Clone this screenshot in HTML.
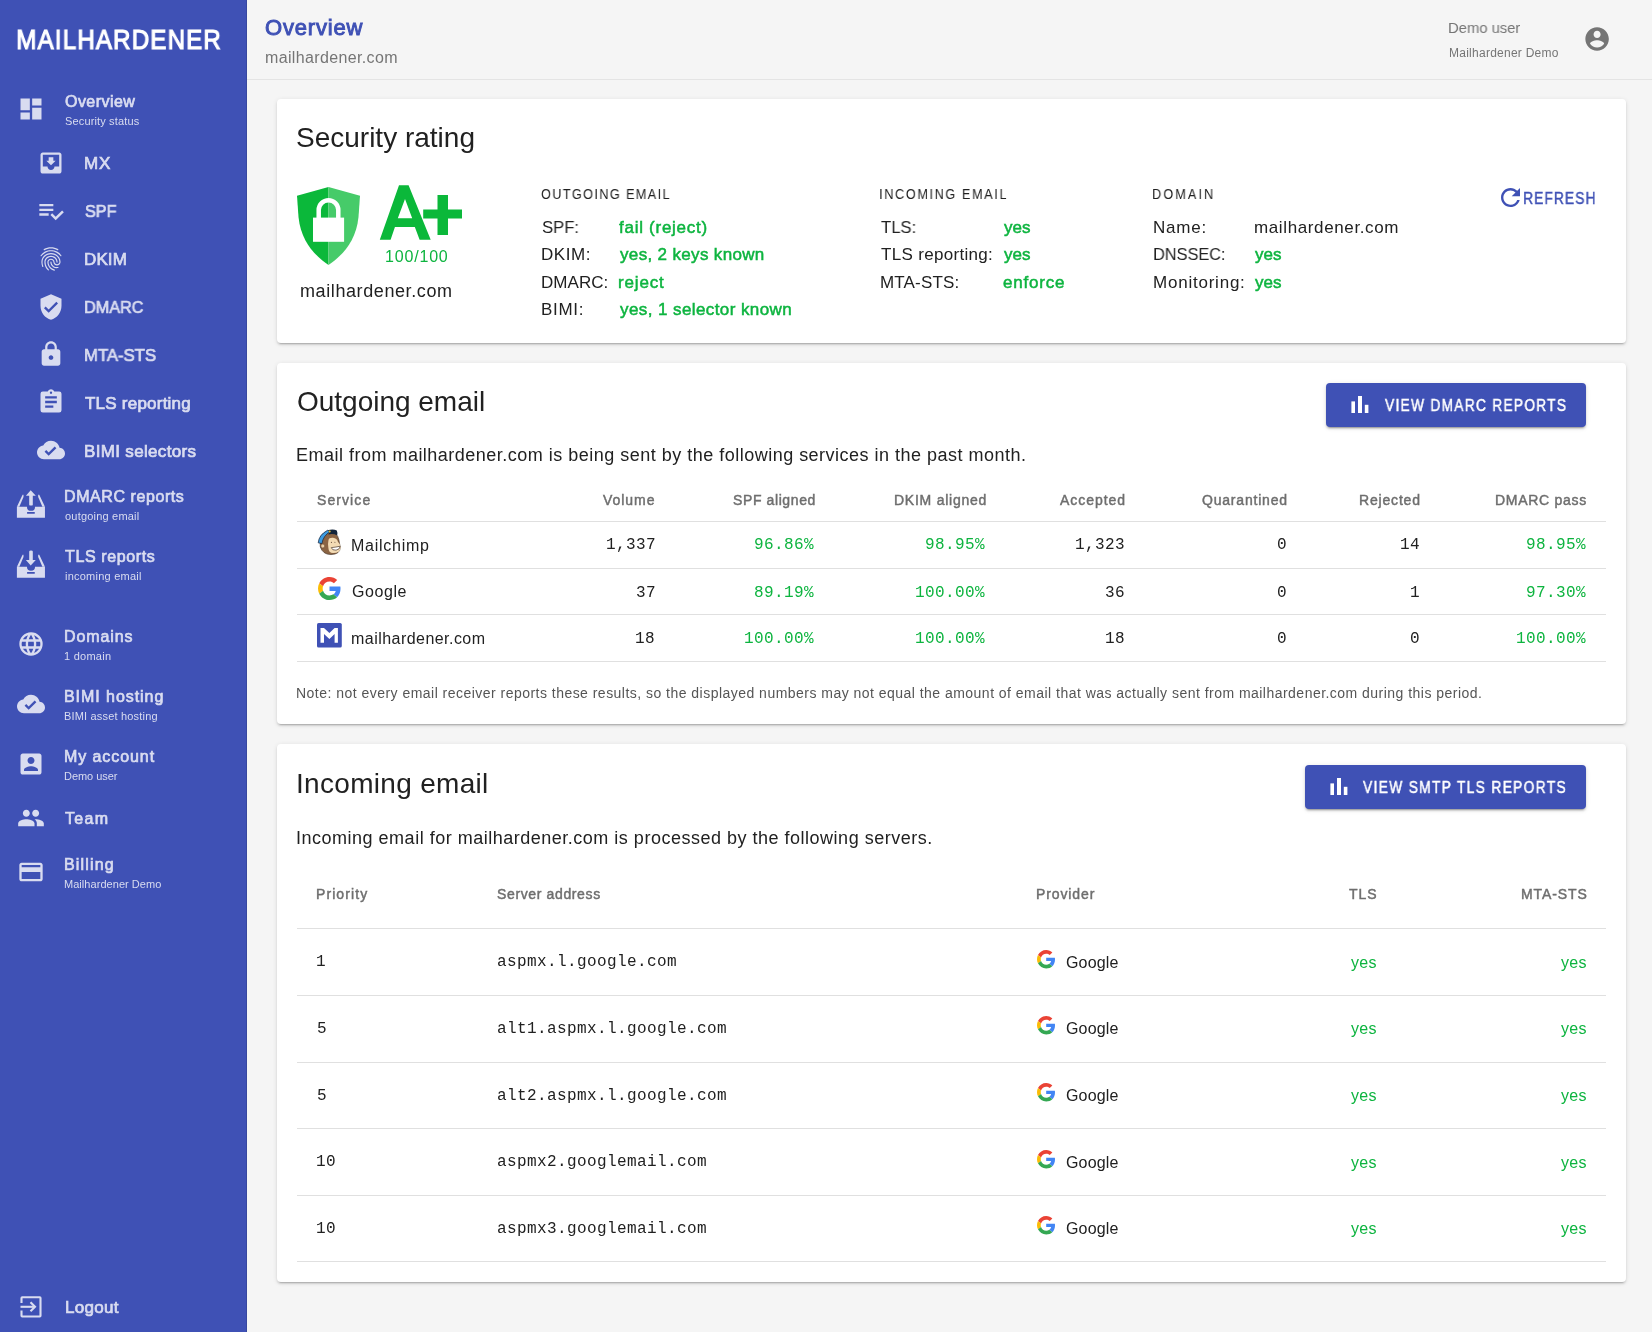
<!DOCTYPE html>
<html><head><meta charset="utf-8"><title>Mailhardener - Overview</title>
<style>
html,body{margin:0;padding:0}
body{width:1652px;height:1332px;position:relative;overflow:hidden;background:#F5F5F5;font-family:'Liberation Sans',sans-serif}
.t{position:absolute;white-space:nowrap;will-change:transform}
.i{position:absolute;overflow:visible}
.card{position:absolute;left:277px;width:1349px;background:#fff;border-radius:4px;box-shadow:0 3px 1px -2px rgba(0,0,0,.15),0 2px 2px 0 rgba(0,0,0,.1),0 1px 5px 0 rgba(0,0,0,.1)}
.btn{position:absolute;background:#3F51B5;border-radius:4px;box-shadow:0 3px 1px -2px rgba(0,0,0,.2),0 2px 2px 0 rgba(0,0,0,.14),0 1px 5px 0 rgba(0,0,0,.12)}
.hr{position:absolute;left:297px;width:1309px;height:1px;background:#E0E0E0}
</style></head><body>
<div style="position:absolute;left:0;top:0;width:247px;height:1332px;background:#3F51B5"></div>
<div style="position:absolute;left:246px;top:0;width:1px;height:1332px;background:rgba(0,0,0,.12)"></div>
<div style="position:absolute;left:247px;top:79px;width:1405px;height:1px;background:#E4E4E4"></div>
<div class="t" style="top:25.80px;font-size:28px;line-height:28px;color:#FFFFFF;font-family:'Liberation Sans',sans-serif;-webkit-text-stroke:1.22px #FFFFFF;letter-spacing:1.395px;left:16.46px;transform:scaleX(0.8600);transform-origin:2.24px 0;">MAILHARDENER</div>
<svg class="i" style="left:16.7px;top:95px;width:28px;height:28px" viewBox="0 0 24 24"><path fill="#D9DCF0" d="M13,3V9H21V3M13,21H21V11H13M3,21H11V15H3M3,13H11V3H3V13Z"/></svg>
<div class="t" style="top:93.86px;font-size:16px;line-height:16px;color:#D9DCF0;font-family:'Liberation Sans',sans-serif;-webkit-text-stroke:0.70px #D9DCF0;letter-spacing:0.457px;left:64.58px;">Overview</div>
<div class="t" style="top:116.39px;font-size:11px;line-height:11px;color:#D9DCF0;font-family:'Liberation Sans',sans-serif;letter-spacing:0.144px;left:64.80px;">Security status</div>
<svg class="i" style="left:37px;top:149px;width:28px;height:28px" viewBox="0 0 24 24"><path fill="#D9DCF0" d="M19 3H4.99c-1.11 0-1.98.9-1.98 2L3 19c0 1.1.88 2 1.99 2H19c1.1 0 2-.9 2-2V5c0-1.1-.9-2-2-2zm0 12h-4c0 1.66-1.35 3-3 3s-3-1.34-3-3H4.99V5H19v10zm-3-5h-2V7h-4v3H8l4 4 4-4z"/></svg>
<div class="t" style="top:155.31px;font-size:17px;line-height:17px;color:#D9DCF0;font-family:'Liberation Sans',sans-serif;-webkit-text-stroke:0.74px #D9DCF0;letter-spacing:0.800px;left:84.24px;">MX</div>
<svg class="i" style="left:37px;top:197px;width:28px;height:28px" viewBox="0 0 24 24"><path fill="#D9DCF0" d="M14 10H2v2h12v-2zm0-4H2v2h12V6zM2 16h8v-2H2v2zm19.5-4.5L23 13l-6.99 7-4.51-4.5L13 14l3.01 3 5.49-5.5z"/></svg>
<div class="t" style="top:203.31px;font-size:17px;line-height:17px;color:#D9DCF0;font-family:'Liberation Sans',sans-serif;-webkit-text-stroke:0.74px #D9DCF0;left:84.83px;transform:scaleX(0.9488);transform-origin:0.77px 0;">SPF</div>
<svg class="i" style="left:37px;top:245px;width:28px;height:28px" viewBox="0 0 24 24"><path fill="#D9DCF0" d="M17.81 4.47c-.08 0-.16-.02-.23-.06C15.66 3.42 14 3 12.01 3c-1.98 0-3.86.47-5.57 1.41-.24.13-.54.04-.68-.2-.13-.24-.04-.55.2-.68C7.82 2.52 9.86 2 12.01 2c2.13 0 3.98.47 6.01 1.51.25.13.34.43.21.67-.09.18-.26.29-.42.29zM3.5 9.72c-.1 0-.2-.03-.29-.09-.23-.16-.28-.47-.12-.7.99-1.4 2.25-2.5 3.75-3.27C9.98 4.04 14 4.03 17.15 5.65c1.5.77 2.76 1.86 3.75 3.25.16.22.11.54-.12.7-.23.16-.54.11-.7-.12-.9-1.26-2.04-2.25-3.39-2.94-2.87-1.47-6.54-1.47-9.4.01-1.36.7-2.5 1.7-3.4 2.96-.08.14-.23.21-.39.21zm6.25 12.07c-.13 0-.26-.05-.35-.15-.87-.87-1.34-1.43-2.01-2.64-.69-1.23-1.05-2.73-1.05-4.34 0-2.97 2.54-5.39 5.66-5.39s5.66 2.42 5.66 5.39c0 .28-.22.5-.5.5s-.5-.22-.5-.5c0-2.42-2.09-4.39-4.66-4.39-2.57 0-4.66 1.970-4.66 4.39 0 1.44.32 2.77.93 3.85.64 1.15 1.08 1.64 1.85 2.42.19.2.19.51 0 .71-.11.1-.24.15-.37.15zm7.17-1.85c-1.19 0-2.24-.3-3.1-.89-1.49-1.01-2.38-2.65-2.38-4.39 0-.28.22-.5.5-.5s.5.22.5.5c0 1.41.72 2.74 1.94 3.56.71.48 1.540.71 2.54.71.24 0 .64-.03 1.04-.1.27-.05.53.13.58.41.05.27-.13.53-.41.58-.57.11-1.07.12-1.21.12zM14.91 22c-.04 0-.09-.01-.13-.02-1.59-.44-2.63-1.03-3.72-2.1-1.4-1.39-2.17-3.24-2.17-5.22 0-1.62 1.38-2.94 3.08-2.94 1.7 0 3.08 1.32 3.08 2.94 0 1.07.93 1.94 2.08 1.94s2.08-.87 2.08-1.94c0-3.77-3.25-6.83-7.25-6.83-2.84 0-5.44 1.58-6.61 4.03-.39.81-.59 1.76-.59 2.8 0 .78.07 2.01.67 3.610.1.26-.03.55-.29.64-.26.1-.55-.04-.64-.29-.49-1.31-.73-2.61-.73-3.96 0-1.2.23-2.29.68-3.24 1.33-2.79 4.28-4.6 7.51-4.6 4.55 0 8.25 3.51 8.25 7.83 0 1.62-1.38 2.94-3.08 2.94s-3.08-1.32-3.08-2.94c0-1.07-.93-1.94-2.08-1.94s-2.08.87-2.08 1.94c0 1.71.66 3.31 1.87 4.51.95.94 1.86 1.46 3.27 1.85.27.07.42.35.35.61-.05.23-.26.38-.47.38z"/></svg>
<div class="t" style="top:251.31px;font-size:17px;line-height:17px;color:#D9DCF0;font-family:'Liberation Sans',sans-serif;-webkit-text-stroke:0.74px #D9DCF0;letter-spacing:0.102px;left:84.24px;">DKIM</div>
<svg class="i" style="left:37px;top:293px;width:28px;height:28px" viewBox="0 0 24 24"><path fill="#D9DCF0" d="M12 1L3 5v6c0 5.55 3.84 10.74 9 12 5.16-1.26 9-6.45 9-12V5l-9-4zm-2 16l-4-4 1.41-1.41L10 14.17l6.59-6.59L18 9l-8 8z"/></svg>
<div class="t" style="top:299.31px;font-size:17px;line-height:17px;color:#D9DCF0;font-family:'Liberation Sans',sans-serif;-webkit-text-stroke:0.74px #D9DCF0;left:84.24px;transform:scaleX(0.9528);transform-origin:1.36px 0;">DMARC</div>
<svg class="i" style="left:37px;top:340px;width:28px;height:28px" viewBox="0 0 24 24"><path fill="#D9DCF0" d="M18 8h-1V6c0-2.76-2.24-5-5-5S7 3.24 7 6v2H6c-1.1 0-2 .9-2 2v10c0 1.1.9 2 2 2h12c1.1 0 2-.9 2-2V10c0-1.1-.9-2-2-2zm-6 9c-1.1 0-2-.9-2-2s.9-2 2-2 2 .9 2 2-.9 2-2 2zm3.1-9H8.9V6c0-1.71 1.39-3.1 3.1-3.1 1.71 0 3.1 1.39 3.1 3.1v2z"/></svg>
<div class="t" style="top:347.31px;font-size:17px;line-height:17px;color:#D9DCF0;font-family:'Liberation Sans',sans-serif;-webkit-text-stroke:0.74px #D9DCF0;left:84.24px;transform:scaleX(0.9827);transform-origin:1.36px 0;">MTA-STS</div>
<svg class="i" style="left:37px;top:388px;width:28px;height:28px" viewBox="0 0 24 24"><path fill="#D9DCF0" d="M17,9H7V7H17M17,13H7V11H17M14,17H7V15H14M12,3A1,1 0 0,1 13,4A1,1 0 0,1 12,5A1,1 0 0,1 11,4A1,1 0 0,1 12,3M19,3H14.82C14.4,1.84 13.3,1 12,1C10.7,1 9.6,1.84 9.18,3H5A2,2 0 0,0 3,5V19A2,2 0 0,0 5,21H19A2,2 0 0,0 21,19V5A2,2 0 0,0 19,3Z"/></svg>
<div class="t" style="top:395.31px;font-size:17px;line-height:17px;color:#D9DCF0;font-family:'Liberation Sans',sans-serif;-webkit-text-stroke:0.74px #D9DCF0;letter-spacing:0.228px;left:85.26px;">TLS reporting</div>
<svg class="i" style="left:37px;top:436px;width:28px;height:28px" viewBox="0 0 24 24"><path fill="#D9DCF0" d="M19.35 10.04C18.67 6.59 15.64 4 12 4 9.11 4 6.6 5.64 5.35 8.04 2.34 8.36 0 10.91 0 14c0 3.31 2.69 6 6 6h13c2.76 0 5-2.24 5-5 0-2.64-2.05-4.78-4.65-4.96zM10 17l-3.5-3.5 1.41-1.41L10 14.17 15.18 9l1.41 1.41L10 17z"/></svg>
<div class="t" style="top:443.31px;font-size:17px;line-height:17px;color:#D9DCF0;font-family:'Liberation Sans',sans-serif;-webkit-text-stroke:0.74px #D9DCF0;letter-spacing:0.328px;left:84.24px;">BIMI selectors</div>
<div class="t" style="top:488.86px;font-size:16px;line-height:16px;color:#D9DCF0;font-family:'Liberation Sans',sans-serif;-webkit-text-stroke:0.70px #D9DCF0;letter-spacing:0.580px;left:64.02px;">DMARC reports</div>
<div class="t" style="top:511.39px;font-size:11px;line-height:11px;color:#D9DCF0;font-family:'Liberation Sans',sans-serif;letter-spacing:0.204px;left:64.86px;">outgoing email</div>
<div class="t" style="top:548.86px;font-size:16px;line-height:16px;color:#D9DCF0;font-family:'Liberation Sans',sans-serif;-webkit-text-stroke:0.70px #D9DCF0;letter-spacing:0.628px;left:64.98px;">TLS reports</div>
<div class="t" style="top:571.39px;font-size:11px;line-height:11px;color:#D9DCF0;font-family:'Liberation Sans',sans-serif;letter-spacing:0.235px;left:64.58px;">incoming email</div>
<svg class="i" style="left:16.7px;top:630px;width:28px;height:28px" viewBox="0 0 24 24"><path fill="#D9DCF0" d="M16.36,14C16.44,13.34 16.5,12.68 16.5,12C16.5,11.32 16.44,10.66 16.36,10H19.74C19.9,10.64 20,11.31 20,12C20,12.69 19.9,13.36 19.74,14M14.59,19.56C15.19,18.45 15.65,17.25 15.97,16H18.92C17.96,17.65 16.43,18.93 14.59,19.56M14.34,14H9.66C9.56,13.34 9.5,12.68 9.5,12C9.5,11.32 9.56,10.65 9.66,10H14.34C14.43,10.65 14.5,11.32 14.5,12C14.5,12.68 14.43,13.34 14.34,14M12,19.96C11.17,18.76 10.5,17.43 10.09,16H13.91C13.5,17.43 12.83,18.76 12,19.96M8,8H5.08C6.03,6.34 7.57,5.06 9.4,4.44C8.8,5.55 8.35,6.75 8,8M5.08,16H8C8.35,17.25 8.8,18.45 9.4,19.56C7.57,18.93 6.03,17.65 5.08,16M4.26,14C4.1,13.36 4,12.69 4,12C4,11.31 4.1,10.64 4.26,10H7.64C7.56,10.66 7.5,11.32 7.5,12C7.5,12.68 7.56,13.34 7.64,14M12,4.03C12.83,5.23 13.5,6.57 13.91,8H10.09C10.5,6.57 11.17,5.23 12,4.03M18.92,8H15.97C15.65,6.75 15.19,5.55 14.59,4.44C16.43,5.07 17.96,6.34 18.92,8M12,2C6.47,2 2,6.5 2,12A10,10 0 0,0 12,22A10,10 0 0,0 22,12A10,10 0 0,0 12,2Z"/></svg>
<div class="t" style="top:628.86px;font-size:16px;line-height:16px;color:#D9DCF0;font-family:'Liberation Sans',sans-serif;-webkit-text-stroke:0.70px #D9DCF0;letter-spacing:0.887px;left:64.02px;">Domains</div>
<div class="t" style="top:651.39px;font-size:11px;line-height:11px;color:#D9DCF0;font-family:'Liberation Sans',sans-serif;letter-spacing:0.260px;left:64.47px;">1 domain</div>
<svg class="i" style="left:16.7px;top:690px;width:28px;height:28px" viewBox="0 0 24 24"><path fill="#D9DCF0" d="M19.35 10.04C18.67 6.59 15.64 4 12 4 9.11 4 6.6 5.64 5.35 8.04 2.34 8.36 0 10.91 0 14c0 3.31 2.69 6 6 6h13c2.76 0 5-2.24 5-5 0-2.64-2.05-4.78-4.65-4.96zM10 17l-3.5-3.5 1.41-1.41L10 14.17 15.18 9l1.41 1.41L10 17z"/></svg>
<div class="t" style="top:688.86px;font-size:16px;line-height:16px;color:#D9DCF0;font-family:'Liberation Sans',sans-serif;-webkit-text-stroke:0.70px #D9DCF0;letter-spacing:0.942px;left:64.02px;">BIMI hosting</div>
<div class="t" style="top:711.39px;font-size:11px;line-height:11px;color:#D9DCF0;font-family:'Liberation Sans',sans-serif;letter-spacing:0.180px;left:64.42px;">BIMI asset hosting</div>
<svg class="i" style="left:16.7px;top:750px;width:28px;height:28px" viewBox="0 0 24 24"><path fill="#D9DCF0" d="M3 5v14c0 1.1.89 2 2 2h14c1.1 0 2-.9 2-2V5c0-1.1-.9-2-2-2H5c-1.11 0-2 .9-2 2zm12 4c0 1.66-1.34 3-3 3s-3-1.34-3-3 1.34-3 3-3 3 1.34 3 3zm-9 8c0-2 4-3.1 6-3.1s6 1.1 6 3.1v1H6v-1z"/></svg>
<div class="t" style="top:748.86px;font-size:16px;line-height:16px;color:#D9DCF0;font-family:'Liberation Sans',sans-serif;-webkit-text-stroke:0.70px #D9DCF0;letter-spacing:0.922px;left:64.02px;">My account</div>
<div class="t" style="top:771.39px;font-size:11px;line-height:11px;color:#D9DCF0;font-family:'Liberation Sans',sans-serif;letter-spacing:-0.037px;left:64.42px;">Demo user</div>
<svg class="i" style="left:16.7px;top:804px;width:28px;height:28px" viewBox="0 0 24 24"><path fill="#D9DCF0" d="M16 11c1.66 0 2.99-1.34 2.99-3S17.66 5 16 5c-1.66 0-3 1.34-3 3s1.34 3 3 3zm-8 0c1.66 0 2.99-1.34 2.99-3S9.66 5 8 5C6.34 5 5 6.34 5 8s1.34 3 3 3zm0 2c-2.33 0-7 1.17-7 3.5V19h14v-2.5c0-2.33-4.67-3.5-7-3.5zm8 0c-.29 0-.62.02-.97.05 1.16.84 1.97 1.970 1.97 3.45V19h6v-2.5c0-2.33-4.67-3.5-7-3.5z"/></svg>
<div class="t" style="top:810.96px;font-size:16px;line-height:16px;color:#D9DCF0;font-family:'Liberation Sans',sans-serif;-webkit-text-stroke:0.70px #D9DCF0;letter-spacing:1.347px;left:64.98px;">Team</div>
<svg class="i" style="left:16.7px;top:858px;width:28px;height:28px" viewBox="0 0 24 24"><path fill="#D9DCF0" d="M20 4H4c-1.11 0-1.99.89-1.99 2L2 18c0 1.11.89 2 2 2h16c1.11 0 2-.89 2-2V6c0-1.11-.89-2-2-2zm0 14H4v-6h16v6zm0-10H4V6h16v2z"/></svg>
<div class="t" style="top:856.86px;font-size:16px;line-height:16px;color:#D9DCF0;font-family:'Liberation Sans',sans-serif;-webkit-text-stroke:0.70px #D9DCF0;letter-spacing:1.150px;left:64.02px;">Billing</div>
<div class="t" style="top:879.39px;font-size:11px;line-height:11px;color:#D9DCF0;font-family:'Liberation Sans',sans-serif;letter-spacing:0.046px;left:64.42px;">Mailhardener Demo</div>
<div class="t" style="top:1298.91px;font-size:17px;line-height:17px;color:#D9DCF0;font-family:'Liberation Sans',sans-serif;-webkit-text-stroke:0.74px #D9DCF0;letter-spacing:0.302px;left:64.54px;">Logout</div>
<svg class="i" style="left:10px;top:484px;width:42px;height:40px" viewBox="0 0 1400 1332"><g fill="#D9DCF0"><path d="M230 760 L565 760 A135 135 0 0 0 835 760 L1165 760 L1165 1125 L230 1125 Z M570 935 L570 990 L825 990 L825 935 Z" fill-rule="evenodd"/><path d="M230 760 L420 360 L450 360 L450 430 L310 760 Z"/><path d="M1165 760 L975 360 L940 360 L940 430 L1080 760 Z"/><path d="M690 205 L860 390 L760 390 L760 690 Q760 720 700 720 Q640 720 640 690 L640 390 L530 390 Z"/></g></svg>
<svg class="i" style="left:10px;top:544px;width:42px;height:40px" viewBox="0 0 1400 1332"><g fill="#D9DCF0"><path d="M230 760 L565 760 A135 135 0 0 0 835 760 L1165 760 L1165 1125 L230 1125 Z M570 935 L570 990 L825 990 L825 935 Z" fill-rule="evenodd"/><path d="M230 760 L420 360 L450 360 L450 430 L310 760 Z"/><path d="M1165 760 L975 360 L940 360 L940 430 L1080 760 Z"/><path d="M690 720 L860 535 L760 535 L760 250 Q760 215 700 215 Q640 215 640 250 L640 535 L530 535 Z"/></g></svg>
<svg class="i" style="left:18px;top:1294px;width:26px;height:26px" viewBox="0 0 26 26"><g fill="none" stroke="#D9DCF0" stroke-width="2.1"><path d="M3.5 9 V4 Q3.5 3.3 4.2 3.3 H21.8 Q22.5 3.3 22.5 4 V21.8 Q22.5 22.5 21.8 22.5 H4.2 Q3.5 22.5 3.5 21.8 V16.5"/><path d="M2.5 12.8 H17"/><path d="M12.5 8.3 L17 12.8 L12.5 17.3"/></g></svg>
<div class="t" style="top:16.88px;font-size:22px;line-height:22px;color:#3F51B5;font-family:'Liberation Sans',sans-serif;-webkit-text-stroke:0.96px #3F51B5;letter-spacing:0.821px;left:264.81px;">Overview</div>
<div class="t" style="top:49.96px;font-size:16px;line-height:16px;color:#757575;font-family:'Liberation Sans',sans-serif;letter-spacing:0.359px;left:264.76px;">mailhardener.com</div>
<div class="t" style="top:20.20px;font-size:15px;line-height:15px;color:#757575;font-family:'Liberation Sans',sans-serif;left:1448.40px;transform:scaleX(0.9861);transform-origin:1.20px 0;">Demo user</div>
<div class="t" style="top:47.24px;font-size:12px;line-height:12px;color:#757575;font-family:'Liberation Sans',sans-serif;letter-spacing:0.255px;left:1448.64px;">Mailhardener Demo</div>
<svg class="i" style="left:1582.9px;top:24.9px;width:28.2px;height:28.2px" viewBox="0 0 24 24"><path fill="#757575" d="M12 2C6.48 2 2 6.48 2 12s4.48 10 10 10 10-4.48 10-10S17.52 2 12 2zm0 3c1.66 0 3 1.34 3 3s-1.34 3-3 3-3-1.34-3-3 1.34-3 3-3zm0 14.2c-2.5 0-4.71-1.28-6-3.22.03-1.99 4-3.08 6-3.08 1.99 0 5.97 1.09 6 3.08-1.29 1.94-3.5 3.22-6 3.22z"/></svg>
<div class="card" style="top:99px;height:244px"></div>
<div class="card" style="top:363px;height:361px"></div>
<div class="card" style="top:744px;height:538px"></div>
<div class="t" style="top:123.90px;font-size:28px;line-height:28px;color:#212121;font-family:'Liberation Sans',sans-serif;letter-spacing:0.001px;left:296.24px;">Security rating</div>
<svg class="i" style="left:297px;top:187px;width:63px;height:78px" viewBox="0 0 63 78"><path fill="#0BB83A" d="M31.5 0 L31.5 78 C20 70 4 56 1.5 30 L0 8.7 Z"/><path fill="#46CB69" d="M31.5 0 L31.5 78 C43 70 59 56 61.5 30 L63 8.7 Z"/><path fill="#fff" d="M16 30.6 H47.1 V54.8 H16 Z"/><path fill="none" stroke="#fff" stroke-width="4.5" d="M21.7 31 V23 A9.8 9.8 0 0 1 41.3 23 V31"/></svg>
<svg class="i" style="left:379px;top:184px;width:85px;height:58px" viewBox="0 0 85 58"><path fill="#0BB83A" d="M0.8 55.8 L20 1.3 L29.6 1.3 L51.7 55.8 L40.6 55.8 L35.83 43 L15.94 43 L11.6 55.8 Z M18.8 34.3 L33.2 34.3 L26 15 Z"/><path fill="#0BB83A" d="M58.5 11 H69 V25.5 H83 V34.6 H69 V51 H58.5 V34.6 H44.2 V25.5 H58.5 Z"/></svg>
<div class="t" style="top:248.86px;font-size:16px;line-height:16px;color:#0DB43F;font-family:'Liberation Sans',sans-serif;letter-spacing:0.820px;left:385.00px;">100/100</div>
<div class="t" style="top:281.96px;font-size:18px;line-height:18px;color:#212121;font-family:'Liberation Sans',sans-serif;letter-spacing:0.596px;left:299.53px;">mailhardener.com</div>
<div class="t" style="top:187.35px;font-size:14px;line-height:14px;color:#212121;font-family:'Liberation Sans',sans-serif;letter-spacing:1.587px;left:540.87px;transform:scaleX(0.9000);transform-origin:0.63px 0;">OUTGOING EMAIL</div>
<div class="t" style="top:187.35px;font-size:14px;line-height:14px;color:#212121;font-family:'Liberation Sans',sans-serif;letter-spacing:1.846px;left:878.54px;transform:scaleX(0.9000);transform-origin:1.26px 0;">INCOMING EMAIL</div>
<div class="t" style="top:187.35px;font-size:14px;line-height:14px;color:#212121;font-family:'Liberation Sans',sans-serif;letter-spacing:2.359px;left:1151.58px;transform:scaleX(0.9000);transform-origin:1.12px 0;">DOMAIN</div>
<div class="t" style="top:218.71px;font-size:17px;line-height:17px;color:#212121;font-family:'Liberation Sans',sans-serif;left:541.94px;transform:scaleX(0.9795);transform-origin:0.77px 0;">SPF:</div>
<div class="t" style="top:218.71px;font-size:17px;line-height:17px;color:#0DB43F;font-family:'Liberation Sans',sans-serif;-webkit-text-stroke:0.50px #0DB43F;letter-spacing:0.731px;left:619.25px;">fail (reject)</div>
<div class="t" style="top:246.01px;font-size:17px;line-height:17px;color:#212121;font-family:'Liberation Sans',sans-serif;letter-spacing:0.558px;left:541.34px;">DKIM:</div>
<div class="t" style="top:246.01px;font-size:17px;line-height:17px;color:#0DB43F;font-family:'Liberation Sans',sans-serif;-webkit-text-stroke:0.50px #0DB43F;letter-spacing:0.339px;left:619.50px;">yes, 2 keys known</div>
<div class="t" style="top:273.51px;font-size:17px;line-height:17px;color:#212121;font-family:'Liberation Sans',sans-serif;letter-spacing:0.045px;left:541.34px;">DMARC:</div>
<div class="t" style="top:273.51px;font-size:17px;line-height:17px;color:#0DB43F;font-family:'Liberation Sans',sans-serif;-webkit-text-stroke:0.50px #0DB43F;letter-spacing:0.845px;left:618.39px;">reject</div>
<div class="t" style="top:301.41px;font-size:17px;line-height:17px;color:#212121;font-family:'Liberation Sans',sans-serif;letter-spacing:0.674px;left:541.34px;">BIMI:</div>
<div class="t" style="top:301.41px;font-size:17px;line-height:17px;color:#0DB43F;font-family:'Liberation Sans',sans-serif;-webkit-text-stroke:0.50px #0DB43F;letter-spacing:0.413px;left:619.50px;">yes, 1 selector known</div>
<div class="t" style="top:218.71px;font-size:17px;line-height:17px;color:#212121;font-family:'Liberation Sans',sans-serif;left:880.66px;transform:scaleX(0.9799);transform-origin:0.34px 0;">TLS:</div>
<div class="t" style="top:218.71px;font-size:17px;line-height:17px;color:#0DB43F;font-family:'Liberation Sans',sans-serif;-webkit-text-stroke:0.50px #0DB43F;letter-spacing:0.080px;left:1003.90px;">yes</div>
<div class="t" style="top:246.01px;font-size:17px;line-height:17px;color:#212121;font-family:'Liberation Sans',sans-serif;letter-spacing:0.315px;left:880.66px;">TLS reporting:</div>
<div class="t" style="top:246.01px;font-size:17px;line-height:17px;color:#0DB43F;font-family:'Liberation Sans',sans-serif;-webkit-text-stroke:0.50px #0DB43F;letter-spacing:0.080px;left:1003.90px;">yes</div>
<div class="t" style="top:273.51px;font-size:17px;line-height:17px;color:#212121;font-family:'Liberation Sans',sans-serif;letter-spacing:0.154px;left:879.64px;">MTA-STS:</div>
<div class="t" style="top:273.51px;font-size:17px;line-height:17px;color:#0DB43F;font-family:'Liberation Sans',sans-serif;-webkit-text-stroke:0.50px #0DB43F;letter-spacing:0.777px;left:1003.22px;">enforce</div>
<div class="t" style="top:218.71px;font-size:17px;line-height:17px;color:#212121;font-family:'Liberation Sans',sans-serif;letter-spacing:0.810px;left:1153.04px;">Name:</div>
<div class="t" style="top:218.71px;font-size:17px;line-height:17px;color:#212121;font-family:'Liberation Sans',sans-serif;letter-spacing:0.624px;left:1254.19px;">mailhardener.com</div>
<div class="t" style="top:246.01px;font-size:17px;line-height:17px;color:#212121;font-family:'Liberation Sans',sans-serif;left:1153.04px;transform:scaleX(0.9593);transform-origin:1.36px 0;">DNSSEC:</div>
<div class="t" style="top:246.01px;font-size:17px;line-height:17px;color:#0DB43F;font-family:'Liberation Sans',sans-serif;-webkit-text-stroke:0.50px #0DB43F;letter-spacing:0.080px;left:1255.30px;">yes</div>
<div class="t" style="top:273.51px;font-size:17px;line-height:17px;color:#212121;font-family:'Liberation Sans',sans-serif;letter-spacing:0.774px;left:1153.04px;">Monitoring:</div>
<div class="t" style="top:273.51px;font-size:17px;line-height:17px;color:#0DB43F;font-family:'Liberation Sans',sans-serif;-webkit-text-stroke:0.50px #0DB43F;letter-spacing:0.080px;left:1255.30px;">yes</div>
<svg class="i" style="left:1500.5px;top:188.4px;width:19px;height:19px" viewBox="4 4 16 16"><path fill="#3F51B5" d="M17.65 6.35C16.2 4.9 14.21 4 12 4c-4.42 0-7.99 3.58-7.99 8s3.57 8 7.99 8c3.73 0 6.84-2.55 7.73-6h-2.08c-.82 2.33-3.04 4-5.65 4-3.31 0-6-2.69-6-6s2.69-6 6-6c1.66 0 3.14.69 4.22 1.78L13 11h7V4l-2.35 2.35z"/></svg>
<div class="t" style="top:190.86px;font-size:16px;line-height:16px;color:#3F51B5;font-family:'Liberation Sans',sans-serif;-webkit-text-stroke:0.45px #3F51B5;letter-spacing:1.259px;left:1523.42px;transform:scaleX(0.8600);transform-origin:1.28px 0;">REFRESH</div>
<div class="t" style="top:388.00px;font-size:28px;line-height:28px;color:#212121;font-family:'Liberation Sans',sans-serif;letter-spacing:-0.017px;left:296.94px;">Outgoing email</div>
<div class="btn" style="left:1326px;top:383px;width:260px;height:44px"></div>
<svg class="i" style="left:1351px;top:396px;width:18px;height:17px" viewBox="0 0 18 17"><g fill="#fff"><rect x="0.4" y="5.4" width="3.6" height="11.6"/><rect x="7" y="0" width="4" height="17"/><rect x="13.8" y="8.8" width="3.6" height="8.2"/></g></svg>
<div class="t" style="top:397.96px;font-size:16px;line-height:16px;color:#FFFFFF;font-family:'Liberation Sans',sans-serif;-webkit-text-stroke:0.50px #FFFFFF;letter-spacing:1.471px;left:1384.72px;transform:scaleX(0.8600);transform-origin:0.08px 0;">VIEW DMARC REPORTS</div>
<div class="t" style="top:446.06px;font-size:18px;line-height:18px;color:#212121;font-family:'Liberation Sans',sans-serif;letter-spacing:0.490px;left:296.06px;">Email from mailhardener.com is being sent by the following services in the past month.</div>
<div class="t" style="top:492.65px;font-size:14px;line-height:14px;color:#6E6E6E;font-family:'Liberation Sans',sans-serif;-webkit-text-stroke:0.45px #6E6E6E;letter-spacing:1.083px;left:316.97px;">Service</div>
<div class="t" style="top:492.65px;font-size:14px;line-height:14px;color:#6E6E6E;font-family:'Liberation Sans',sans-serif;-webkit-text-stroke:0.45px #6E6E6E;letter-spacing:0.948px;right:996.48px;">Volume</div>
<div class="t" style="top:492.65px;font-size:14px;line-height:14px;color:#6E6E6E;font-family:'Liberation Sans',sans-serif;-webkit-text-stroke:0.45px #6E6E6E;letter-spacing:0.604px;right:836.51px;">SPF aligned</div>
<div class="t" style="top:492.65px;font-size:14px;line-height:14px;color:#6E6E6E;font-family:'Liberation Sans',sans-serif;-webkit-text-stroke:0.45px #6E6E6E;letter-spacing:0.751px;right:665.37px;">DKIM aligned</div>
<div class="t" style="top:492.65px;font-size:14px;line-height:14px;color:#6E6E6E;font-family:'Liberation Sans',sans-serif;-webkit-text-stroke:0.45px #6E6E6E;letter-spacing:0.966px;right:526.20px;">Accepted</div>
<div class="t" style="top:492.65px;font-size:14px;line-height:14px;color:#6E6E6E;font-family:'Liberation Sans',sans-serif;-webkit-text-stroke:0.45px #6E6E6E;letter-spacing:0.800px;right:364.37px;">Quarantined</div>
<div class="t" style="top:492.65px;font-size:14px;line-height:14px;color:#6E6E6E;font-family:'Liberation Sans',sans-serif;-webkit-text-stroke:0.45px #6E6E6E;letter-spacing:0.819px;right:231.32px;">Rejected</div>
<div class="t" style="top:492.65px;font-size:14px;line-height:14px;color:#6E6E6E;font-family:'Liberation Sans',sans-serif;-webkit-text-stroke:0.45px #6E6E6E;letter-spacing:0.704px;right:64.78px;">DMARC pass</div>
<div class="hr" style="top:521px"></div>
<div class="hr" style="top:568px"></div>
<div class="hr" style="top:614px"></div>
<div class="hr" style="top:661px"></div>
<div class="t" style="top:537.86px;font-size:16px;line-height:16px;color:#212121;font-family:'Liberation Sans',sans-serif;letter-spacing:0.740px;left:351.22px;">Mailchimp</div>
<div class="t" style="top:537.44px;font-size:16px;line-height:16px;color:#212121;font-family:'Liberation Mono',monospace;letter-spacing:0.400px;right:996.39px;">1,337</div>
<div class="t" style="top:537.44px;font-size:16px;line-height:16px;color:#0DB43F;font-family:'Liberation Mono',monospace;letter-spacing:0.400px;right:837.59px;">96.86%</div>
<div class="t" style="top:537.44px;font-size:16px;line-height:16px;color:#0DB43F;font-family:'Liberation Mono',monospace;letter-spacing:0.400px;right:666.59px;">98.95%</div>
<div class="t" style="top:537.44px;font-size:16px;line-height:16px;color:#212121;font-family:'Liberation Mono',monospace;letter-spacing:0.400px;right:526.63px;">1,323</div>
<div class="t" style="top:537.44px;font-size:16px;line-height:16px;color:#212121;font-family:'Liberation Mono',monospace;letter-spacing:0.400px;right:364.64px;">0</div>
<div class="t" style="top:537.44px;font-size:16px;line-height:16px;color:#212121;font-family:'Liberation Mono',monospace;letter-spacing:0.400px;right:231.80px;">14</div>
<div class="t" style="top:537.44px;font-size:16px;line-height:16px;color:#0DB43F;font-family:'Liberation Mono',monospace;letter-spacing:0.400px;right:65.59px;">98.95%</div>
<div class="t" style="top:584.46px;font-size:16px;line-height:16px;color:#212121;font-family:'Liberation Sans',sans-serif;letter-spacing:0.568px;left:351.70px;">Google</div>
<div class="t" style="top:584.74px;font-size:16px;line-height:16px;color:#212121;font-family:'Liberation Mono',monospace;letter-spacing:0.400px;right:996.40px;">37</div>
<div class="t" style="top:584.74px;font-size:16px;line-height:16px;color:#0DB43F;font-family:'Liberation Mono',monospace;letter-spacing:0.400px;right:837.59px;">89.19%</div>
<div class="t" style="top:584.74px;font-size:16px;line-height:16px;color:#0DB43F;font-family:'Liberation Mono',monospace;letter-spacing:0.400px;right:666.59px;">100.00%</div>
<div class="t" style="top:584.74px;font-size:16px;line-height:16px;color:#212121;font-family:'Liberation Mono',monospace;letter-spacing:0.400px;right:526.56px;">36</div>
<div class="t" style="top:584.74px;font-size:16px;line-height:16px;color:#212121;font-family:'Liberation Mono',monospace;letter-spacing:0.400px;right:364.64px;">0</div>
<div class="t" style="top:584.74px;font-size:16px;line-height:16px;color:#212121;font-family:'Liberation Mono',monospace;letter-spacing:0.400px;right:231.88px;">1</div>
<div class="t" style="top:584.74px;font-size:16px;line-height:16px;color:#0DB43F;font-family:'Liberation Mono',monospace;letter-spacing:0.400px;right:65.59px;">97.30%</div>
<div class="t" style="top:630.66px;font-size:16px;line-height:16px;color:#212121;font-family:'Liberation Sans',sans-serif;letter-spacing:0.459px;left:351.46px;">mailhardener.com</div>
<div class="t" style="top:630.94px;font-size:16px;line-height:16px;color:#212121;font-family:'Liberation Mono',monospace;letter-spacing:0.400px;right:996.56px;">18</div>
<div class="t" style="top:630.94px;font-size:16px;line-height:16px;color:#0DB43F;font-family:'Liberation Mono',monospace;letter-spacing:0.400px;right:837.59px;">100.00%</div>
<div class="t" style="top:630.94px;font-size:16px;line-height:16px;color:#0DB43F;font-family:'Liberation Mono',monospace;letter-spacing:0.400px;right:666.59px;">100.00%</div>
<div class="t" style="top:630.94px;font-size:16px;line-height:16px;color:#212121;font-family:'Liberation Mono',monospace;letter-spacing:0.400px;right:526.56px;">18</div>
<div class="t" style="top:630.94px;font-size:16px;line-height:16px;color:#212121;font-family:'Liberation Mono',monospace;letter-spacing:0.400px;right:364.64px;">0</div>
<div class="t" style="top:630.94px;font-size:16px;line-height:16px;color:#212121;font-family:'Liberation Mono',monospace;letter-spacing:0.400px;right:231.64px;">0</div>
<div class="t" style="top:630.94px;font-size:16px;line-height:16px;color:#0DB43F;font-family:'Liberation Mono',monospace;letter-spacing:0.400px;right:65.59px;">100.00%</div>
<svg class="i" style="left:314px;top:526px;width:32px;height:32px" viewBox="0 0 32 32"><path d="M6 14 Q6.5 6 15 6 Q23.5 6 24.8 13.5 L26.3 21.5 Q26 28.3 17 28.6 Q9 28.6 6.3 21 Z" fill="#8B6443" stroke="#3b2a1e" stroke-width="0.6"/><circle cx="8.8" cy="20" r="2" fill="#EBCFA5" stroke="#6b4a30" stroke-width="0.6"/><path d="M14.5 14 Q15 11.5 19 11.8 Q23 12.2 24 16 Q26.8 18 26.6 21.5 Q26.5 27 19 27 Q14.6 27 14.4 22 Q13.6 18 14.5 14 Z" fill="#F3DBB4"/><path d="M17.3 21.6 Q22 21.2 26.2 20.2 Q26 23.6 22 24.2 Q18 24.5 17.3 21.6 Z" fill="#fff" stroke="#4a3525" stroke-width="0.7"/><circle cx="17.4" cy="16.4" r="0.55" fill="#6b5340"/><circle cx="20.9" cy="16.3" r="0.55" fill="#6b5340"/><path d="M4.2 16.8 Q4.8 9 13.5 4.3 L16.3 5.6 Q9.2 9.6 7.9 17.6 Z" fill="#3C9BE0" stroke="#15233a" stroke-width="0.7"/><path d="M13.5 4.3 Q19 2.8 22.8 4.4 Q23.8 6.6 23.2 9.2 Q18.5 7.4 14.2 8.6 L16.3 5.6 Z" fill="#13243A"/><circle cx="15.7" cy="5.5" r="1" fill="#E8C030"/></svg>
<svg class="i" style="left:318px;top:577px;width:23px;height:23px" viewBox="0 0 48 48"><path fill="#EA4335" d="M24 9.5c3.54 0 6.71 1.22 9.21 3.6l6.85-6.85C35.9 2.38 30.47 0 24 0 14.62 0 6.51 5.38 2.56 13.22l7.98 6.19C12.43 13.72 17.74 9.5 24 9.5z"/><path fill="#4285F4" d="M46.98 24.55c0-1.57-.15-3.09-.38-4.55H24v9.02h12.94c-.58 2.960-2.26 5.48-4.78 7.18l7.73 6c4.51-4.18 7.09-10.36 7.09-17.65z"/><path fill="#FBBC05" d="M10.53 28.59c-.48-1.45-.76-2.99-.76-4.59s.27-3.14.76-4.59l-7.98-6.19C.92 16.46 0 20.12 0 24c0 3.88.92 7.54 2.56 10.78l7.97-6.19z"/><path fill="#34A853" d="M24 48c6.48 0 11.930-2.13 15.89-5.81l-7.73-6c-2.15 1.45-4.92 2.3-8.16 2.3-6.26 0-11.57-4.22-13.47-9.91l-7.98 6.19C6.51 42.62 14.62 48 24 48z"/></svg>
<svg class="i" style="left:317.1px;top:623.1px;width:24.8px;height:24.6px" viewBox="0 0 24.8 24.6"><rect width="24.8" height="24.6" rx="1.6" fill="#3F51B5"/><path fill="#fff" d="M3.5 19.7 V4.9 H7 L12.4 10.1 L17.6 4.9 H20.9 V19.7 H17.6 V10.9 L12.4 16.1 L7 10.9 V19.7 Z"/></svg>
<div class="t" style="top:686.35px;font-size:14px;line-height:14px;color:#555555;font-family:'Liberation Sans',sans-serif;letter-spacing:0.473px;left:296.38px;">Note: not every email receiver reports these results, so the displayed numbers may not equal the amount of email that was actually sent from mailhardener.com during this period.</div>
<div class="t" style="top:769.90px;font-size:28px;line-height:28px;color:#212121;font-family:'Liberation Sans',sans-serif;letter-spacing:0.311px;left:295.98px;">Incoming email</div>
<div class="btn" style="left:1305px;top:765px;width:281px;height:44px"></div>
<svg class="i" style="left:1330px;top:778px;width:18px;height:17px" viewBox="0 0 18 17"><g fill="#fff"><rect x="0.4" y="5.4" width="3.6" height="11.6"/><rect x="7" y="0" width="4" height="17"/><rect x="13.8" y="8.8" width="3.6" height="8.2"/></g></svg>
<div class="t" style="top:779.96px;font-size:16px;line-height:16px;color:#FFFFFF;font-family:'Liberation Sans',sans-serif;-webkit-text-stroke:0.50px #FFFFFF;letter-spacing:1.560px;left:1363.42px;transform:scaleX(0.8600);transform-origin:0.08px 0;">VIEW SMTP TLS REPORTS</div>
<div class="t" style="top:828.56px;font-size:18px;line-height:18px;color:#212121;font-family:'Liberation Sans',sans-serif;letter-spacing:0.506px;left:295.88px;">Incoming email for mailhardener.com is processed by the following servers.</div>
<div class="t" style="top:887.45px;font-size:14px;line-height:14px;color:#6E6E6E;font-family:'Liberation Sans',sans-serif;-webkit-text-stroke:0.45px #6E6E6E;letter-spacing:1.083px;left:316.38px;">Priority</div>
<div class="t" style="top:887.45px;font-size:14px;line-height:14px;color:#6E6E6E;font-family:'Liberation Sans',sans-serif;-webkit-text-stroke:0.45px #6E6E6E;letter-spacing:0.631px;left:497.27px;">Server address</div>
<div class="t" style="top:887.45px;font-size:14px;line-height:14px;color:#6E6E6E;font-family:'Liberation Sans',sans-serif;-webkit-text-stroke:0.45px #6E6E6E;letter-spacing:0.883px;left:1035.68px;">Provider</div>
<div class="t" style="top:887.45px;font-size:14px;line-height:14px;color:#6E6E6E;font-family:'Liberation Sans',sans-serif;-webkit-text-stroke:0.45px #6E6E6E;letter-spacing:0.895px;right:274.42px;">TLS</div>
<div class="t" style="top:887.45px;font-size:14px;line-height:14px;color:#6E6E6E;font-family:'Liberation Sans',sans-serif;-webkit-text-stroke:0.45px #6E6E6E;letter-spacing:0.890px;right:64.48px;">MTA-STS</div>
<div class="hr" style="top:928.3px"></div>
<div class="t" style="top:954.44px;font-size:16px;line-height:16px;color:#212121;font-family:'Liberation Mono',monospace;letter-spacing:0.400px;left:316.38px;">1</div>
<div class="t" style="top:954.44px;font-size:16px;line-height:16px;color:#212121;font-family:'Liberation Mono',monospace;letter-spacing:0.400px;left:497.34px;">aspmx.l.google.com</div>
<svg class="i" style="left:1036.8px;top:949.8px;width:18.4px;height:18.4px" viewBox="0 0 48 48"><path fill="#EA4335" d="M24 9.5c3.54 0 6.71 1.22 9.21 3.6l6.85-6.85C35.9 2.38 30.47 0 24 0 14.62 0 6.51 5.38 2.56 13.22l7.98 6.19C12.43 13.72 17.74 9.5 24 9.5z"/><path fill="#4285F4" d="M46.98 24.55c0-1.57-.15-3.09-.38-4.55H24v9.02h12.94c-.58 2.960-2.26 5.48-4.78 7.18l7.73 6c4.51-4.18 7.09-10.36 7.09-17.65z"/><path fill="#FBBC05" d="M10.53 28.59c-.48-1.45-.76-2.99-.76-4.59s.27-3.14.76-4.59l-7.98-6.19C.92 16.46 0 20.12 0 24c0 3.88.92 7.54 2.56 10.78l7.97-6.19z"/><path fill="#34A853" d="M24 48c6.48 0 11.930-2.13 15.89-5.81l-7.73-6c-2.15 1.45-4.92 2.3-8.16 2.3-6.26 0-11.57-4.22-13.47-9.91l-7.98 6.19C6.51 42.62 14.62 48 24 48z"/></svg>
<div class="t" style="top:954.76px;font-size:16px;line-height:16px;color:#212121;font-family:'Liberation Sans',sans-serif;letter-spacing:0.168px;left:1066.40px;">Google</div>
<div class="t" style="top:954.76px;font-size:16px;line-height:16px;color:#0DB43F;font-family:'Liberation Sans',sans-serif;letter-spacing:0.340px;right:275.08px;">yes</div>
<div class="t" style="top:954.76px;font-size:16px;line-height:16px;color:#0DB43F;font-family:'Liberation Sans',sans-serif;letter-spacing:0.340px;right:65.08px;">yes</div>
<div class="hr" style="top:994.9px"></div>
<div class="t" style="top:1021.04px;font-size:16px;line-height:16px;color:#212121;font-family:'Liberation Mono',monospace;letter-spacing:0.400px;left:316.54px;">5</div>
<div class="t" style="top:1021.04px;font-size:16px;line-height:16px;color:#212121;font-family:'Liberation Mono',monospace;letter-spacing:0.400px;left:497.34px;">alt1.aspmx.l.google.com</div>
<svg class="i" style="left:1036.8px;top:1016.4px;width:18.4px;height:18.4px" viewBox="0 0 48 48"><path fill="#EA4335" d="M24 9.5c3.54 0 6.71 1.22 9.21 3.6l6.85-6.85C35.9 2.38 30.47 0 24 0 14.62 0 6.51 5.38 2.56 13.22l7.98 6.19C12.43 13.72 17.74 9.5 24 9.5z"/><path fill="#4285F4" d="M46.98 24.55c0-1.57-.15-3.09-.38-4.55H24v9.02h12.94c-.58 2.960-2.26 5.48-4.78 7.18l7.73 6c4.51-4.18 7.09-10.36 7.09-17.65z"/><path fill="#FBBC05" d="M10.53 28.59c-.48-1.45-.76-2.99-.76-4.59s.27-3.14.76-4.59l-7.98-6.19C.92 16.46 0 20.12 0 24c0 3.88.92 7.54 2.56 10.78l7.97-6.19z"/><path fill="#34A853" d="M24 48c6.48 0 11.930-2.13 15.89-5.81l-7.73-6c-2.15 1.45-4.92 2.3-8.16 2.3-6.26 0-11.57-4.22-13.47-9.91l-7.98 6.19C6.51 42.62 14.62 48 24 48z"/></svg>
<div class="t" style="top:1021.36px;font-size:16px;line-height:16px;color:#212121;font-family:'Liberation Sans',sans-serif;letter-spacing:0.168px;left:1066.40px;">Google</div>
<div class="t" style="top:1021.36px;font-size:16px;line-height:16px;color:#0DB43F;font-family:'Liberation Sans',sans-serif;letter-spacing:0.340px;right:275.08px;">yes</div>
<div class="t" style="top:1021.36px;font-size:16px;line-height:16px;color:#0DB43F;font-family:'Liberation Sans',sans-serif;letter-spacing:0.340px;right:65.08px;">yes</div>
<div class="hr" style="top:1061.5px"></div>
<div class="t" style="top:1087.64px;font-size:16px;line-height:16px;color:#212121;font-family:'Liberation Mono',monospace;letter-spacing:0.400px;left:316.54px;">5</div>
<div class="t" style="top:1087.64px;font-size:16px;line-height:16px;color:#212121;font-family:'Liberation Mono',monospace;letter-spacing:0.400px;left:497.34px;">alt2.aspmx.l.google.com</div>
<svg class="i" style="left:1036.8px;top:1083.0px;width:18.4px;height:18.4px" viewBox="0 0 48 48"><path fill="#EA4335" d="M24 9.5c3.54 0 6.71 1.22 9.21 3.6l6.85-6.85C35.9 2.38 30.47 0 24 0 14.62 0 6.51 5.38 2.56 13.22l7.98 6.19C12.43 13.72 17.74 9.5 24 9.5z"/><path fill="#4285F4" d="M46.98 24.55c0-1.57-.15-3.09-.38-4.55H24v9.02h12.94c-.58 2.960-2.26 5.48-4.78 7.18l7.73 6c4.51-4.18 7.09-10.36 7.09-17.65z"/><path fill="#FBBC05" d="M10.53 28.59c-.48-1.45-.76-2.99-.76-4.59s.27-3.14.76-4.59l-7.98-6.19C.92 16.46 0 20.12 0 24c0 3.88.92 7.54 2.56 10.78l7.97-6.19z"/><path fill="#34A853" d="M24 48c6.48 0 11.930-2.13 15.89-5.81l-7.73-6c-2.15 1.45-4.92 2.3-8.16 2.3-6.26 0-11.57-4.22-13.47-9.91l-7.98 6.19C6.51 42.62 14.62 48 24 48z"/></svg>
<div class="t" style="top:1087.96px;font-size:16px;line-height:16px;color:#212121;font-family:'Liberation Sans',sans-serif;letter-spacing:0.168px;left:1066.40px;">Google</div>
<div class="t" style="top:1087.96px;font-size:16px;line-height:16px;color:#0DB43F;font-family:'Liberation Sans',sans-serif;letter-spacing:0.340px;right:275.08px;">yes</div>
<div class="t" style="top:1087.96px;font-size:16px;line-height:16px;color:#0DB43F;font-family:'Liberation Sans',sans-serif;letter-spacing:0.340px;right:65.08px;">yes</div>
<div class="hr" style="top:1128.1px"></div>
<div class="t" style="top:1154.24px;font-size:16px;line-height:16px;color:#212121;font-family:'Liberation Mono',monospace;letter-spacing:0.400px;left:316.38px;">10</div>
<div class="t" style="top:1154.24px;font-size:16px;line-height:16px;color:#212121;font-family:'Liberation Mono',monospace;letter-spacing:0.400px;left:497.34px;">aspmx2.googlemail.com</div>
<svg class="i" style="left:1036.8px;top:1149.6px;width:18.4px;height:18.4px" viewBox="0 0 48 48"><path fill="#EA4335" d="M24 9.5c3.54 0 6.71 1.22 9.21 3.6l6.85-6.85C35.9 2.38 30.47 0 24 0 14.62 0 6.51 5.38 2.56 13.22l7.98 6.19C12.43 13.72 17.74 9.5 24 9.5z"/><path fill="#4285F4" d="M46.98 24.55c0-1.57-.15-3.09-.38-4.55H24v9.02h12.94c-.58 2.960-2.26 5.48-4.78 7.18l7.73 6c4.51-4.18 7.09-10.36 7.09-17.65z"/><path fill="#FBBC05" d="M10.53 28.59c-.48-1.45-.76-2.99-.76-4.59s.27-3.14.76-4.59l-7.98-6.19C.92 16.46 0 20.12 0 24c0 3.88.92 7.54 2.56 10.78l7.97-6.19z"/><path fill="#34A853" d="M24 48c6.48 0 11.930-2.13 15.89-5.81l-7.73-6c-2.15 1.45-4.92 2.3-8.16 2.3-6.26 0-11.57-4.22-13.47-9.91l-7.98 6.19C6.51 42.62 14.62 48 24 48z"/></svg>
<div class="t" style="top:1154.56px;font-size:16px;line-height:16px;color:#212121;font-family:'Liberation Sans',sans-serif;letter-spacing:0.168px;left:1066.40px;">Google</div>
<div class="t" style="top:1154.56px;font-size:16px;line-height:16px;color:#0DB43F;font-family:'Liberation Sans',sans-serif;letter-spacing:0.340px;right:275.08px;">yes</div>
<div class="t" style="top:1154.56px;font-size:16px;line-height:16px;color:#0DB43F;font-family:'Liberation Sans',sans-serif;letter-spacing:0.340px;right:65.08px;">yes</div>
<div class="hr" style="top:1194.7px"></div>
<div class="t" style="top:1220.84px;font-size:16px;line-height:16px;color:#212121;font-family:'Liberation Mono',monospace;letter-spacing:0.400px;left:316.38px;">10</div>
<div class="t" style="top:1220.84px;font-size:16px;line-height:16px;color:#212121;font-family:'Liberation Mono',monospace;letter-spacing:0.400px;left:497.34px;">aspmx3.googlemail.com</div>
<svg class="i" style="left:1036.8px;top:1216.1999999999998px;width:18.4px;height:18.4px" viewBox="0 0 48 48"><path fill="#EA4335" d="M24 9.5c3.54 0 6.71 1.22 9.21 3.6l6.85-6.85C35.9 2.38 30.47 0 24 0 14.62 0 6.51 5.38 2.56 13.22l7.98 6.19C12.43 13.72 17.74 9.5 24 9.5z"/><path fill="#4285F4" d="M46.98 24.55c0-1.57-.15-3.09-.38-4.55H24v9.02h12.94c-.58 2.960-2.26 5.48-4.78 7.18l7.73 6c4.51-4.18 7.09-10.36 7.09-17.65z"/><path fill="#FBBC05" d="M10.53 28.59c-.48-1.45-.76-2.99-.76-4.59s.27-3.14.76-4.59l-7.98-6.19C.92 16.46 0 20.12 0 24c0 3.88.92 7.54 2.56 10.78l7.97-6.19z"/><path fill="#34A853" d="M24 48c6.48 0 11.930-2.13 15.89-5.81l-7.73-6c-2.15 1.45-4.92 2.3-8.16 2.3-6.26 0-11.57-4.22-13.47-9.91l-7.98 6.19C6.51 42.62 14.62 48 24 48z"/></svg>
<div class="t" style="top:1221.16px;font-size:16px;line-height:16px;color:#212121;font-family:'Liberation Sans',sans-serif;letter-spacing:0.168px;left:1066.40px;">Google</div>
<div class="t" style="top:1221.16px;font-size:16px;line-height:16px;color:#0DB43F;font-family:'Liberation Sans',sans-serif;letter-spacing:0.340px;right:275.08px;">yes</div>
<div class="t" style="top:1221.16px;font-size:16px;line-height:16px;color:#0DB43F;font-family:'Liberation Sans',sans-serif;letter-spacing:0.340px;right:65.08px;">yes</div>
<div class="hr" style="top:1261.3px"></div>
</body></html>
